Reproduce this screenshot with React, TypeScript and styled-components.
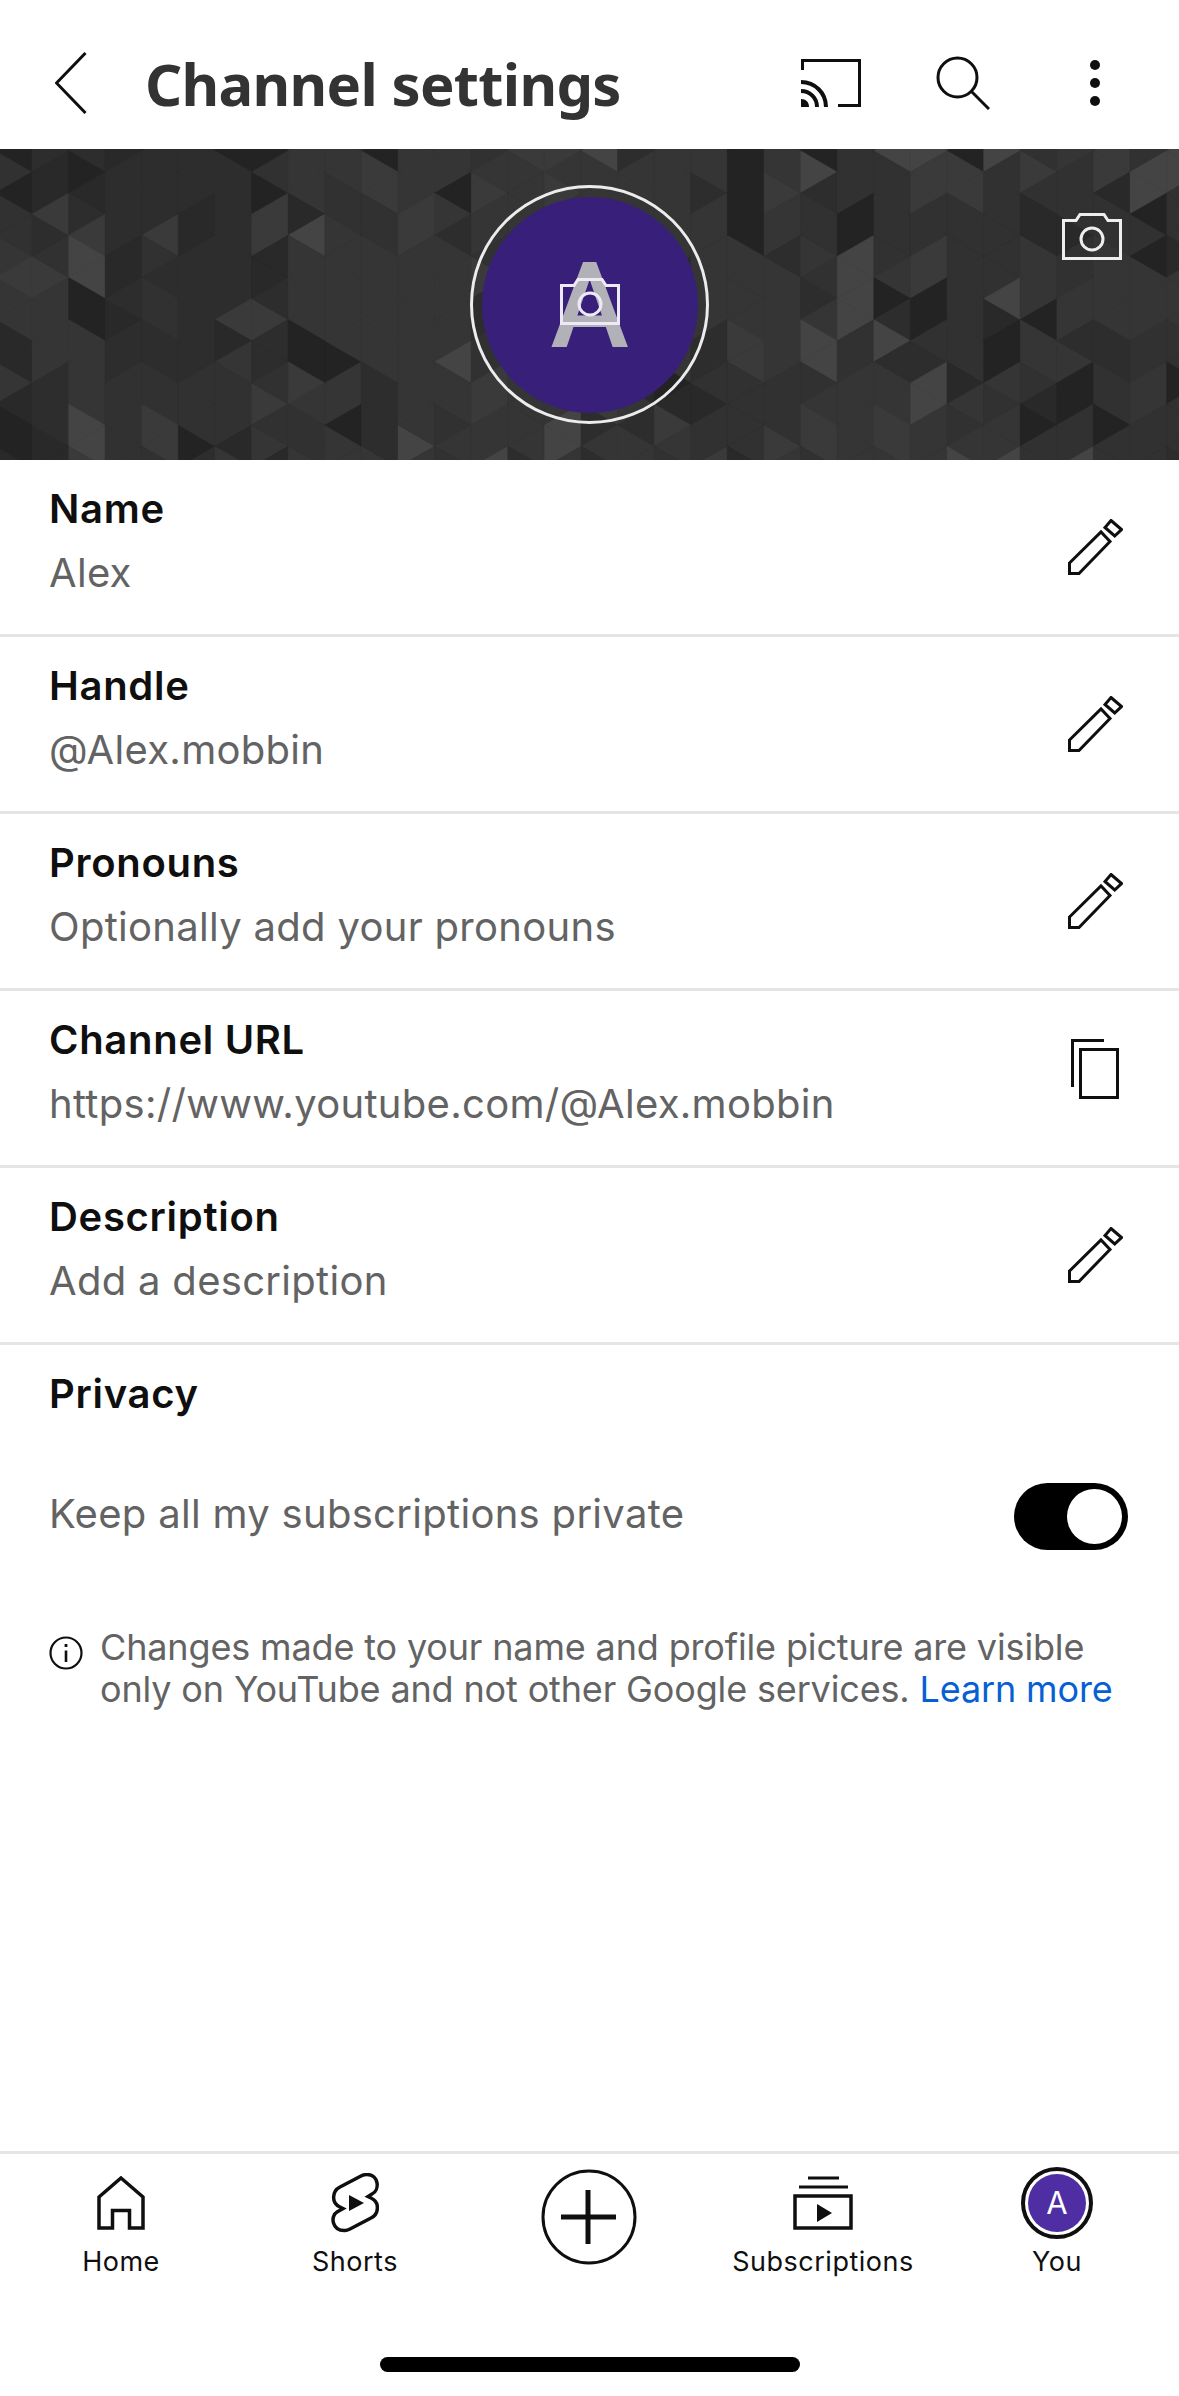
import styled, { createGlobalStyle } from 'styled-components';

const GlobalStyle = createGlobalStyle`
  html, body {
    margin: 0;
    padding: 0;
    background: #fff;
  }
  body {
    font-family: Inter, Roboto, "Liberation Sans", sans-serif;
  }
`;

// banner mosaic: triangular lattice with seeded greys
const CELL_W = 36.6;
const CELL_H = 42.2;
const SHADES = ['#232323', '#292929', '#2d2d2d', '#313131', '#353535', '#3a3a3a', '#444444'];

const hash = (a: number, b: number) => {
  const n = Math.sin(a * 127.1 + b * 311.7) * 43758.5453;
  return n - Math.floor(n);
};

const buildTriangles = () => {
  const list: { points: string; fill: string }[] = [];
  const colY = (c: number) => 1.8 + (c % 2 === 1 ? 0 : CELL_H / 2);
  for (let c = 0; c < 34; c++) {
    const xl = -4.6 - CELL_W + c * CELL_W;
    const xr = xl + CELL_W;
    for (let k = -1; k < 9; k++) {
      const yl = colY(c) + k * CELL_H;
      const yr = colY(c + 1) + k * CELL_H;
      const midL = yr > yl ? yr : yr + CELL_H;
      const midR = yl > yr ? yl : yl + CELL_H;
      const pick = (salt: number) => {
        const coarse = hash(Math.floor((c + 1) / 5), Math.floor((k + 1) / 3));
        const fine = hash(c + salt * 17, k + salt * 5);
        if (hash(c * 3 + salt, k * 7 + 1) < 0.5) return SHADES[2 + Math.floor(coarse * 3)];
        return SHADES[Math.floor(fine * SHADES.length)];
      };
      const a = pick(1);
      // about half the neighbours share a grey, which makes the bigger rhombus shapes
      const b = hash(c * 5 + 2, k * 3 + 9) < 0.5 ? a : pick(2);
      list.push({ points: `${xl},${yl} ${xl},${yl + CELL_H} ${xr},${midL}`, fill: a });
      list.push({ points: `${xr},${yr} ${xr},${yr + CELL_H} ${xl},${midR}`, fill: b });
    }
  }
  return list;
};

const triangles = buildTriangles();

const Page = styled.div`
  width: 1179px;
  height: 2396px;
  display: flex;
  flex-direction: column;
  background: #fff;
  overflow: hidden;
`;

const Header = styled.header`
  height: 149px;
  flex-shrink: 0;
  display: flex;
  align-items: center;
  box-sizing: border-box;
  padding: 17px 0 0 55px;
`;

const BackIcon = styled.svg`
  width: 32px;
  height: 62px;
  flex-shrink: 0;
  margin-right: 58px;
`;

const Title = styled.h1`
  margin: 0;
  flex: 1;
  font-family: "Noto Sans", sans-serif;
  font-size: 58px;
  font-weight: 700;
  letter-spacing: -0.7px;
  color: #333;
`;

const HeaderIcon = styled.svg<{ $gap: number }>`
  flex-shrink: 0;
  margin-right: ${(p) => p.$gap}px;
`;

const Banner = styled.div`
  position: relative;
  height: 311px;
  flex-shrink: 0;
  display: flex;
  align-items: center;
  justify-content: center;
  background: #303030;
  overflow: hidden;
`;

const Mosaic = styled.svg`
  position: absolute;
  inset: 0;
  width: 100%;
  height: 100%;
`;

const AvatarRing = styled.div`
  position: relative;
  width: 239px;
  height: 239px;
  box-sizing: border-box;
  border: 3px solid #ececec;
  border-radius: 50%;
  display: flex;
  align-items: center;
  justify-content: center;
`;

const AvatarDisc = styled.div`
  width: 216px;
  height: 216px;
  border-radius: 50%;
  background: #38207a;
  color: #b3b1b8;
  font-family: Roboto, sans-serif;
  font-size: 118px;
  font-weight: 500;
  line-height: 220px;
  text-align: center;
`;

const CameraIcon = styled.svg`
  position: absolute;
  width: 60px;
  height: 47px;
`;

const CenterCamera = styled(CameraIcon)`
  left: 87px;
  top: 90px;
`;

const CornerCamera = styled(CameraIcon)`
  right: 57px;
  top: 64px;
`;

const Row = styled.div`
  height: 177px;
  flex-shrink: 0;
  box-sizing: border-box;
  border-bottom: 3px solid #e5e5e5;
  padding: 17px 56px 0 49px;
  display: flex;
  justify-content: space-between;
  align-items: flex-start;
`;

const RowTitle = styled.div`
  font-size: 40px;
  line-height: 64px;
  font-weight: 600;
  letter-spacing: 0.7px;
  color: #0f0f0f;
`;

const RowValue = styled.div`
  font-size: 40px;
  line-height: 64px;
  letter-spacing: 0.3px;
  color: #636363;
`;

const ToggleLabel = styled(RowValue)`
  padding-bottom: 5px;
`;

const RowIcon = styled.svg<{ $shift: number; $inset?: number }>`
  flex-shrink: 0;
  margin-top: ${(p) => p.$shift}px;
  margin-right: ${(p) => p.$inset ?? 0}px;
`;

const Privacy = styled.section`
  padding: 17px 51px 0 49px;
`;

const ToggleRow = styled.div`
  margin-top: 56px;
  display: flex;
  align-items: center;
  justify-content: space-between;
`;

const Toggle = styled.div`
  width: 114px;
  height: 67px;
  box-sizing: border-box;
  padding: 6px;
  border-radius: 34px;
  background: #000;
  display: flex;
  justify-content: flex-end;
`;

const Knob = styled.div`
  width: 55px;
  height: 55px;
  border-radius: 50%;
  background: #fff;
`;

const Notice = styled.div`
  margin-top: 75px;
  display: flex;
  gap: 17px;
`;

const InfoIcon = styled.svg`
  width: 34px;
  height: 34px;
  flex-shrink: 0;
  margin-top: 10px;
`;

const NoticeText = styled.p`
  margin: 0;
  font-size: 36px;
  line-height: 42px;
  letter-spacing: -0.15px;
  color: #636363;
  white-space: nowrap;
`;

const LearnMore = styled.span`
  color: #065fd4;
`;

const Spacer = styled.div`
  flex: 1;
`;

const BottomNav = styled.nav`
  height: 245px;
  flex-shrink: 0;
  box-sizing: border-box;
  border-top: 3px solid #e5e5e5;
  display: flex;
  flex-direction: column;
  align-items: center;
`;

const Tabs = styled.div`
  align-self: stretch;
  padding: 13px 0 0 4px;
  display: grid;
  grid-template-columns: repeat(5, 234px);
`;

const Tab = styled.div`
  display: flex;
  flex-direction: column;
  align-items: center;
`;

const TabIconSlot = styled.div`
  height: 72px;
  margin-bottom: 5px;
  display: flex;
  align-items: center;
  justify-content: center;
`;

const TabLabel = styled.span`
  font-size: 27px;
  line-height: 36px;
  letter-spacing: 0.5px;
  color: #0f0f0f;
`;

const CreateIcon = styled.svg`
  width: 96px;
  height: 96px;
  margin-top: 2px;
`;

const ProfileRing = styled.div`
  width: 72px;
  height: 72px;
  box-sizing: border-box;
  border: 4px solid #0f0f0f;
  border-radius: 50%;
  padding: 3px;
`;

const ProfileDisc = styled.div`
  height: 100%;
  border-radius: 50%;
  background: #4f2da3;
  color: #fff;
  font-size: 31px;
  line-height: 58px;
  text-align: center;
`;

const HomeIndicator = styled.div`
  width: 420px;
  height: 15px;
  margin-top: auto;
  margin-bottom: 24px;
  border-radius: 8px;
  background: #000;
`;

const Pencil = () => (
  <RowIcon $shift={42} width="55" height="56" viewBox="0 0 55 56" fill="none" stroke="#0f0f0f" strokeWidth="3">
    <path d="M1.5 44 L33 13 L42 22.5 L11 54.5 L1.5 54.5 Z" />
    <path d="M43 1.5 L53.5 10.5 L46.7 17 L37 8.5 Z" />
  </RowIcon>
);

const CopyIcon = () => (
  <RowIcon $shift={31} $inset={4} width="48" height="60" viewBox="0 0 48 60" fill="none" stroke="#0f0f0f" strokeWidth="3">
    <path d="M1.5 48 V1.5 H33" />
    <rect x="9.5" y="10.5" width="37" height="48" />
  </RowIcon>
);

const Camera = () => (
  <>
    <path d="M1.5 45.5 V7.5 H14 L18 1.5 H42 L46 7.5 H58.5 V45.5 Z" />
    <circle cx="30" cy="26" r="11" />
  </>
);

const rows = [
  { title: 'Name', value: 'Alex' },
  { title: 'Handle', value: '@Alex.mobbin' },
  { title: 'Pronouns', value: 'Optionally add your pronouns' },
  { title: 'Channel URL', value: 'https://www.youtube.com/@Alex.mobbin', copy: true },
  { title: 'Description', value: 'Add a description' },
];

export default function App() {
  return (
    <Page>
      <GlobalStyle />
      <Header>
        <BackIcon viewBox="0 0 32 62" fill="none" stroke="#0f0f0f" strokeWidth="3">
          <path d="M30.5 1 L1.5 31 L30.5 61" />
        </BackIcon>
        <Title>Channel settings</Title>
        <HeaderIcon $gap={75} width="60" height="48" viewBox="0 0 60 48" fill="none" stroke="#0f0f0f" strokeWidth="3">
          <path d="M1.5 11 V1.5 H58.5 V46.5 H37" />
          <path d="M0 23 C14 23 25 34 25 48" strokeWidth="4" />
          <path d="M0 32 C9 32 16 39 16 48" strokeWidth="4" />
          <path d="M0 40 H0 C5 40 8 43 8 48 H0 Z" fill="#0f0f0f" stroke="none" />
        </HeaderIcon>
        <HeaderIcon $gap={99} width="54" height="54" viewBox="0 0 54 54" fill="none" stroke="#0f0f0f" strokeWidth="3">
          <circle cx="21.5" cy="21.5" r="19.5" />
          <path d="M35 35 L53 53" />
        </HeaderIcon>
        <HeaderIcon $gap={78} width="12" height="48" viewBox="0 0 12 48" fill="#0f0f0f">
          <circle cx="6" cy="6" r="5" />
          <circle cx="6" cy="24" r="5" />
          <circle cx="6" cy="42" r="5" />
        </HeaderIcon>
      </Header>

      <Banner>
        <Mosaic viewBox="0 0 1179 311" preserveAspectRatio="none">
          {triangles.map((t, i) => (
            <polygon key={i} points={t.points} fill={t.fill} stroke={t.fill} strokeWidth="0.4" />
          ))}
        </Mosaic>
        <AvatarRing>
          <AvatarDisc>A</AvatarDisc>
          <CenterCamera viewBox="0 0 60 47" fill="none" stroke="#eeeaf5" strokeWidth="3">
            <Camera />
          </CenterCamera>
        </AvatarRing>
        <CornerCamera viewBox="0 0 60 47" fill="none" stroke="#eeeeee" strokeWidth="3">
          <Camera />
        </CornerCamera>
      </Banner>

      {rows.map((row) => (
        <Row key={row.title}>
          <div>
            <RowTitle>{row.title}</RowTitle>
            <RowValue>{row.value}</RowValue>
          </div>
          {row.copy ? <CopyIcon /> : <Pencil />}
        </Row>
      ))}

      <Privacy>
        <RowTitle>Privacy</RowTitle>
        <ToggleRow>
          <ToggleLabel>Keep all my subscriptions private</ToggleLabel>
          <Toggle>
            <Knob />
          </Toggle>
        </ToggleRow>
        <Notice>
          <InfoIcon viewBox="0 0 34 34" fill="none" stroke="#0f0f0f" strokeWidth="2.2">
            <circle cx="17" cy="17" r="15.5" />
            <path d="M17 14.5 V26" strokeWidth="2.6" />
            <path d="M17 8 V11" strokeWidth="2.8" />
          </InfoIcon>
          <NoticeText>
            Changes made to your name and profile picture are visible
            <br />
            only on YouTube and not other Google services. <LearnMore>Learn more</LearnMore>
          </NoticeText>
        </Notice>
      </Privacy>

      <Spacer />

      <BottomNav>
        <Tabs>
          <Tab>
            <TabIconSlot>
              <svg width="48" height="54" viewBox="0 0 48 54" fill="none" stroke="#0f0f0f" strokeWidth="3.5">
                <path d="M24 2 L46 21 V52 H32.5 V34.5 H15.5 V52 H2 V21 Z" />
              </svg>
            </TabIconSlot>
            <TabLabel>Home</TabLabel>
          </Tab>
          <Tab>
            <TabIconSlot>
              <svg width="48" height="60" viewBox="0 0 48 60" fill="none" stroke="#0f0f0f" strokeWidth="3.5">
                <path d="M30 3 L9 14 C1 18 0 30 9 34 L12 35.5 L6 39 C-1 43 1 58 14 57.5 C16 57.5 17 57 19 56 L40 45 C48 41 49 29 40 25 L37 23.5 L41 21 C49 17 48 1.5 36 1.5 C34 1.5 32 2 30 3 Z" />
                <path d="M18 22 L33 30 L18 38 Z" fill="#0f0f0f" stroke="none" />
              </svg>
            </TabIconSlot>
            <TabLabel>Shorts</TabLabel>
          </Tab>
          <Tab>
            <CreateIcon viewBox="0 0 96 96" fill="none" stroke="#0f0f0f" strokeWidth="3">
              <circle cx="48" cy="48" r="46" />
              <path d="M47 21 V75 M20 48 H75" strokeWidth="5" />
            </CreateIcon>
          </Tab>
          <Tab>
            <TabIconSlot>
              <svg width="60" height="54" viewBox="0 0 60 54" fill="none" stroke="#0f0f0f" strokeWidth="3.5">
                <path d="M15 2 H46 M6 11 H55" strokeWidth="3" />
                <rect x="2" y="20" width="56" height="32" />
                <path d="M24 28 L39 37 L24 46 Z" fill="#0f0f0f" stroke="none" />
              </svg>
            </TabIconSlot>
            <TabLabel>Subscriptions</TabLabel>
          </Tab>
          <Tab>
            <TabIconSlot>
              <ProfileRing>
                <ProfileDisc>A</ProfileDisc>
              </ProfileRing>
            </TabIconSlot>
            <TabLabel>You</TabLabel>
          </Tab>
        </Tabs>
        <HomeIndicator />
      </BottomNav>
    </Page>
  );
}
